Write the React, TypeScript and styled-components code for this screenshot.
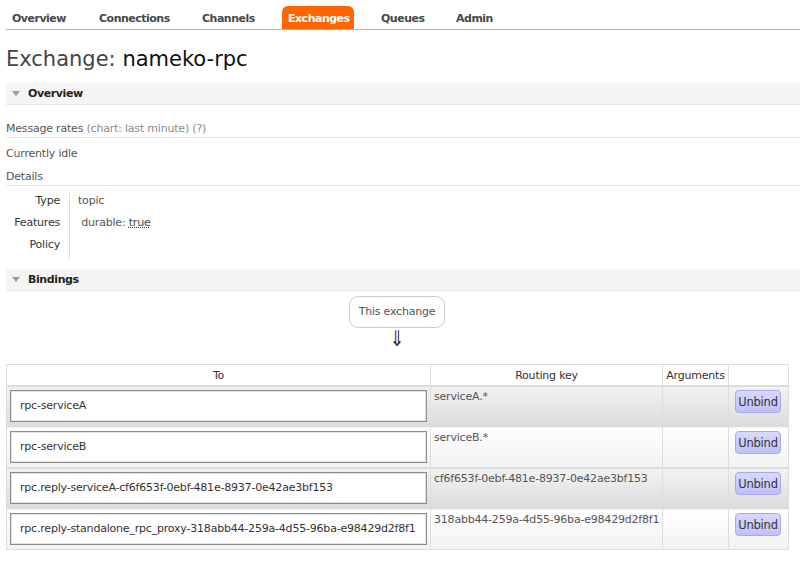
import React from "react";
import styled, { createGlobalStyle } from "styled-components";

const Global = createGlobalStyle`
  html, body { margin: 0; padding: 0; background: #fff; }
  body {
    font-family: "DejaVu Sans", Verdana, sans-serif;
    font-size: 11px;
    letter-spacing: -0.2px;
    color: #444;
  }
  * { box-sizing: border-box; }
`;

const Page = styled.div`
  width: 800px;
  padding: 6px 0 0 6px;
`;

const Nav = styled.ul`
  display: flex;
  list-style: none;
  margin: 0;
  padding: 0;
  height: 24px;
  border-bottom: 1px solid #f8a24e;
`;

const Tab = styled.li<{ $active?: boolean; $w: number; $mr: number }>`
  width: ${(p) => p.$w}px;
  margin-right: ${(p) => p.$mr}px;
  height: 23px;
  padding: 6px 6px 0;
  font-weight: bold;
  font-size: 11px;
  letter-spacing: -0.5px;
  color: ${(p) => (p.$active ? "#fff" : "#484848")};
  background: ${(p) => (p.$active ? "#ff6600" : "transparent")};
  border-radius: 6px 6px 0 0;
  white-space: nowrap;
`;

const Title = styled.h1`
  margin: 16px 0 0;
  font-size: 21px;
  font-weight: normal;
  letter-spacing: 0;
  color: #444;
  line-height: 26px;
  b { font-weight: normal; color: #111; }
`;

const SectionHeader = styled.div<{ $mt: number }>`
  display: flex;
  align-items: center;
  gap: 8px;
  height: 22px;
  margin-top: ${(p) => p.$mt}px;
  padding-left: 6px;
  background: #f5f5f5;
  border-bottom: 1px solid #e6e6e6;
  font-weight: bold;
  font-size: 11px;
  letter-spacing: -0.4px;
  color: #222;
`;

const Triangle = styled.span`
  width: 0;
  height: 0;
  border-left: 4px solid transparent;
  border-right: 4px solid transparent;
  border-top: 5px solid #9a9a9a;
`;

const SubHeading = styled.div<{ $line?: boolean; $mt: number }>`
  margin-top: ${(p) => p.$mt}px;
  padding-bottom: 1px;
  border-bottom: 1px solid ${(p) => (p.$line ? "#e8e8e8" : "transparent")};
  color: #555;
  font-size: 11px;
  line-height: 14px;
  span { color: #8a8a8a; }
`;

const Details = styled.div`
  display: grid;
  grid-template-columns: 63px auto;
  margin-top: 7px;
  width: 300px;
`;

const DLabel = styled.div`
  text-align: right;
  padding: 1px 9px 7px 0;
  line-height: 14px;
  color: #333;
`;

const DValue = styled.div`
  border-left: 1px solid #ddd;
  padding: 1px 0 7px 8px;
  line-height: 14px;
  color: #555;
  abbr { text-decoration: underline dotted; color: #444; }
`;

const Flow = styled.div`
  display: flex;
  flex-direction: column;
  align-items: center;
  width: 782px;
  padding-top: 5px;
`;

const Box = styled.div`
  border: 1px solid #ccc;
  border-radius: 9px;
  padding: 8px 9px 8px;
  color: #555;
  line-height: 14px;
`;

const Arrow = styled.div`
  font-size: 18px;
  line-height: 20px;
  margin-top: 1px;
  color: #333;
  transform: scaleY(1.2);
`;

const Table = styled.table`
  border-collapse: collapse;
  table-layout: fixed;
  margin-top: 15px;
  width: 782px;
  border: 1px solid #ddd;
  th {
    font-weight: normal;
    color: #333;
    height: 21px;
    border: 1px solid #ddd;
    padding: 0 2px;
  }
`;

const Row = styled.tr<{ $odd: boolean }>`
  height: 41px;
  background: ${(p) =>
    p.$odd
      ? "linear-gradient(#f2f2f2, #dcdcdc)"
      : "linear-gradient(#ffffff, #f2f2f2)"};
  border-top: 1px solid #ddd;
`;

const Cell = styled.td`
  vertical-align: top;
  border-left: 1px solid #ddd;
  padding: 4px 3px;
  color: #555;
  line-height: 14px;
  white-space: nowrap;
`;

const QueueBox = styled.div`
  height: 32px;
  border: 1px solid #8c8c8c;
  box-shadow: inset 0 0 0 1px #e4e4e4;
  background: #fff;
  display: flex;
  align-items: center;
  padding-left: 9px;
  color: #333;
  white-space: nowrap;
`;

const ButtonCell = styled.td`
  vertical-align: top;
  border-left: 1px solid #ddd;
  padding: 4px 0 0 6px;
`;

const Unbind = styled.button`
  width: 46px;
  height: 23px;
  padding: 0;
  border: 1px solid #a9a9f0;
  border-radius: 4px;
  background: linear-gradient(#d8d8ff, #c0c0f8);
  font-family: "DejaVu Sans", Verdana, sans-serif;
  font-size: 11.5px;
  letter-spacing: -0.2px;
  color: #333;
`;

const tabs = [
  { label: "Overview", w: 87, mr: 0 },
  { label: "Connections", w: 103, mr: 0 },
  { label: "Channels", w: 86, mr: 0 },
  { label: "Exchanges", w: 72, mr: 21, active: true },
  { label: "Queues", w: 75, mr: 0 },
  { label: "Admin", w: 60, mr: 0 },
];

const bindings = [
  { to: "rpc-serviceA", key: "serviceA.*" },
  { to: "rpc-serviceB", key: "serviceB.*" },
  { to: "rpc.reply-serviceA-cf6f653f-0ebf-481e-8937-0e42ae3bf153", key: "cf6f653f-0ebf-481e-8937-0e42ae3bf153" },
  { to: "rpc.reply-standalone_rpc_proxy-318abb44-259a-4d55-96ba-e98429d2f8f1", key: "318abb44-259a-4d55-96ba-e98429d2f8f1" },
];

export default function App() {
  return (
    <>
      <Global />
      <Page>
        <Nav>
          {tabs.map((t) => (
            <Tab key={t.label} $active={t.active} $w={t.w} $mr={t.mr}>
              {t.label}
            </Tab>
          ))}
        </Nav>
        <Title>
          Exchange: <b>nameko-rpc</b>
        </Title>
        <SectionHeader $mt={11}>
          <Triangle />
          Overview
        </SectionHeader>
        <SubHeading $line $mt={17}>
          Message rates <span>(chart: last minute) (?)</span>
        </SubHeading>
        <SubHeading $mt={9}>Currently idle</SubHeading>
        <SubHeading $line $mt={7}>Details</SubHeading>
        <Details>
          <DLabel>Type</DLabel>
          <DValue>topic</DValue>
          <DLabel>Features</DLabel>
          <DValue>
            &nbsp;durable: <abbr>true</abbr>
          </DValue>
          <DLabel>Policy</DLabel>
          <DValue>&nbsp;</DValue>
        </Details>
        <SectionHeader $mt={10}>
          <Triangle />
          Bindings
        </SectionHeader>
        <Flow>
          <Box>This exchange</Box>
          <Arrow>⇓</Arrow>
        </Flow>
        <Table>
          <colgroup>
            <col style={{ width: 424 }} />
            <col style={{ width: 232 }} />
            <col style={{ width: 66 }} />
            <col style={{ width: 60 }} />
          </colgroup>
          <thead>
            <tr>
              <th>To</th>
              <th>Routing key</th>
              <th>Arguments</th>
              <th></th>
            </tr>
          </thead>
          <tbody>
            {bindings.map((b, i) => (
              <Row key={b.to} $odd={i % 2 === 0}>
                <Cell>
                  <QueueBox>{b.to}</QueueBox>
                </Cell>
                <Cell>{b.key}</Cell>
                <Cell></Cell>
                <ButtonCell>
                  <Unbind>Unbind</Unbind>
                </ButtonCell>
              </Row>
            ))}
          </tbody>
        </Table>
      </Page>
    </>
  );
}
